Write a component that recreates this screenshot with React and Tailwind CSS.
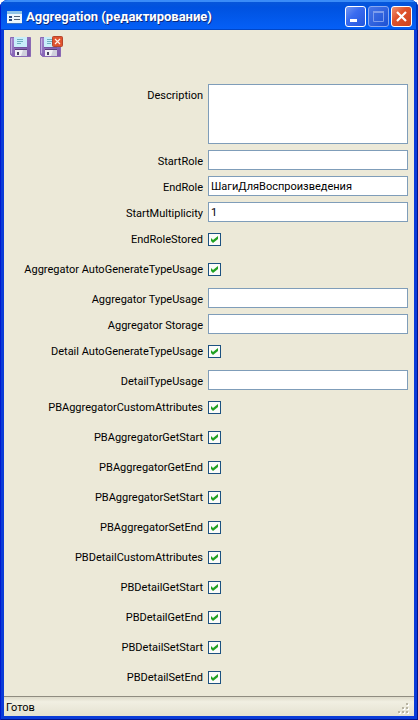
import React from "react";

const rows = [
  { id: "description", label: "Description", type: "area" },
  { id: "startRole", label: "StartRole", type: "text", value: "" },
  { id: "endRole", label: "EndRole", type: "text", value: "ШагиДляВоспроизведения" },
  { id: "startMultiplicity", label: "StartMultiplicity", type: "text", value: "1" },
  { id: "endRoleStored", label: "EndRoleStored", type: "check" },
  { id: "aggAuto", label: "Aggregator AutoGenerateTypeUsage", type: "check" },
  { id: "aggTypeUsage", label: "Aggregator TypeUsage", type: "text", value: "" },
  { id: "aggStorage", label: "Aggregator Storage", type: "text", value: "" },
  { id: "detailAuto", label: "Detail AutoGenerateTypeUsage", type: "check" },
  { id: "detailTypeUsage", label: "DetailTypeUsage", type: "text", value: "" },
  { id: "pbAggCustom", label: "PBAggregatorCustomAttributes", type: "check" },
  { id: "pbAggGetStart", label: "PBAggregatorGetStart", type: "check" },
  { id: "pbAggGetEnd", label: "PBAggregatorGetEnd", type: "check" },
  { id: "pbAggSetStart", label: "PBAggregatorSetStart", type: "check" },
  { id: "pbAggSetEnd", label: "PBAggregatorSetEnd", type: "check" },
  { id: "pbDetCustom", label: "PBDetailCustomAttributes", type: "check" },
  { id: "pbDetGetStart", label: "PBDetailGetStart", type: "check" },
  { id: "pbDetGetEnd", label: "PBDetailGetEnd", type: "check" },
  { id: "pbDetSetStart", label: "PBDetailSetStart", type: "check" },
  { id: "pbDetSetEnd", label: "PBDetailSetEnd", type: "check" },
];

function FormIcon() {
  return (
    <svg width="15" height="13" viewBox="0 0 15 13" aria-hidden="true">
      <rect x="0" y="0" width="15" height="12" fill="#eef6fb" />
      <rect x="0" y="0" width="15" height="3" fill="#8fc3e6" />
      <path d="M0 12.5h15" stroke="#3b72c0" />
      <path d="M2 6h3M2 9h3" stroke="#2b4a80" strokeWidth="2" />
      <path d="M7 5.500h6M7 8.500h6" stroke="#4d5f74" strokeWidth="1" />
    </svg>
  );
}

function SaveIcon({ closing }) {
  return (
    <svg width="24" height="22" viewBox="0 0 24 22" aria-hidden="true">
      <defs>
        <linearGradient id="floppy" x1="0" y1="0" x2="1" y2="1">
          <stop offset="0" stopColor="#a78bd0" />
          <stop offset="0.5" stopColor="#8a68b8" />
          <stop offset="1" stopColor="#7a55a5" />
        </linearGradient>
      </defs>
      <path d="M0.5 1.5h20v19h-18l-2-2z" fill="url(#floppy)" stroke="#8a69b4" />
      <path d="M1.5 2.500v15" stroke="#c3b0df" />
      <rect x="4" y="1" width="13" height="10" fill="#c9eefa" />
      <path d="M4 11.500h13" stroke="#7455a0" />
      <path d="M7 3.500h6M7 5.500h6M7 7.500h4" stroke="#6fb0c0" />
      <rect x="5" y="14" width="12" height="6" fill="#f0f0f4" />
      <path d="M5 13.500h12" stroke="#5b3f7c" />
      <rect x="7" y="16" width="2" height="3" fill="#4b4264" />
      <path d="M13 14h4v6h-6z" fill="#cfd0dc" />
      {closing && (
        <g>
          <rect x="12.5" y="0.5" width="10" height="10" rx="1" fill="#e0532f" stroke="#b5452c" />
          <path d="M15 3l5 5M20 3l-5 5" stroke="#fff0e8" strokeWidth="1.2" />
        </g>
      )}
    </svg>
  );
}

function Field({ row }) {
  const box = "w-full rounded-none border border-[#7f9db9] bg-white text-[11px] text-black outline-none";
  if (row.type === "area") {
    return <textarea id={row.id} className={`${box} block h-[60px] resize-none px-0.5`} />;
  }
  if (row.type === "text") {
    return (
      <input id={row.id} type="text" defaultValue={row.value} className={`${box} block h-5 px-0.5`} />
    );
  }
  return (
    <div className="grid h-6 w-[13px] pt-[5px]">
      <input
        id={row.id}
        type="checkbox"
        defaultChecked
        className="peer col-start-1 row-start-1 size-[13px] appearance-none border border-[#1c5180] bg-[#fbfbf9]"
      />
      <svg
        className="pointer-events-none invisible col-start-1 row-start-1 size-[13px] peer-checked:visible"
        viewBox="0 0 13 13"
        aria-hidden="true"
      >
        <path d="M3 5l2 2 5-4v3l-5 4-2-2z" fill="#21a121" />
      </svg>
    </div>
  );
}

export default function App() {
  return (
    <main className="flex min-h-screen flex-col overflow-hidden rounded-t-lg bg-[#0a3bd8] font-[Roboto,sans-serif] text-[11px] text-black shadow-[inset_1px_0_#0019cf,inset_-1px_0_#00138c,inset_0_-1px_#00138c]">
      <header className="flex h-[30px] items-center justify-between bg-linear-to-b from-[#0a58d8] via-[#0052e0] via-25% to-[#0560f8] pr-1.5 pl-[7px] shadow-[inset_0_2px_#3a8cf8,inset_1px_0_#0019cf,inset_-2px_0_#0030b8,inset_0_-1px_#0046c8]">
        <div className="flex items-center gap-1 pt-1">
          <FormIcon />
          <h1 className="text-[13px] leading-4 font-bold whitespace-nowrap text-white [text-shadow:1px_1px_#0a2a80]">
            Aggregation (редактирование)
          </h1>
        </div>
        <div className="flex gap-0.5 pt-0.5">
          <button
            type="button"
            aria-label="Свернуть"
            className="size-[21px] rounded-[3px] border border-white bg-linear-to-br from-[#7295f0] via-[#3a6cf0] via-40% to-[#2456dc]"
          >
            <svg viewBox="0 0 19 19" aria-hidden="true">
              <path d="M4 12h7v3H4z" fill="#fff" />
            </svg>
          </button>
          <button
            type="button"
            aria-label="Развернуть"
            disabled
            className="size-[21px] rounded-[3px] border border-[#88a8f0] bg-linear-to-br from-[#4775e8] to-[#1b50d4]"
          >
            <svg viewBox="0 0 19 19" aria-hidden="true">
              <path d="M4.500 5h10v9.500h-10z" fill="none" stroke="#7d9cec" />
              <path d="M4 5h11" stroke="#7d9cec" strokeWidth="2" />
            </svg>
          </button>
          <button
            type="button"
            aria-label="Закрыть"
            className="size-[21px] rounded-[3px] border border-white bg-linear-to-br from-[#ee9070] via-[#e0532c] via-40% to-[#cc4420]"
          >
            <svg viewBox="0 0 19 19" aria-hidden="true">
              <path d="M5 5l9 9M14 5l-9 9" stroke="#fff" strokeWidth="2.200" />
            </svg>
          </button>
        </div>
      </header>

      <div className="mx-1 mb-1 flex flex-1 flex-col bg-[#ece9d8]">
        <div className="flex h-[54px] items-start gap-1.5 px-1.5 pt-1.5">
          <button type="button" aria-label="Сохранить">
            <SaveIcon />
          </button>
          <button type="button" aria-label="Сохранить и закрыть">
            <SaveIcon closing />
          </button>
        </div>

        <form className="flex flex-1 flex-col gap-1.5 pr-1.5 pb-1.5">
          {rows.map((row) => (
            <div key={row.id} className="flex items-start gap-[5px]">
              <label htmlFor={row.id} className="h-5 w-[199px] shrink-0 text-right leading-6 whitespace-nowrap">
                {row.label}
              </label>
              <div className="min-w-0 flex-1">
                <Field row={row} />
              </div>
            </div>
          ))}
        </form>

        <footer className="flex h-5 items-end justify-between border-t border-[#8f8c80] bg-linear-to-b from-[#dedbca] via-[#f1efe2] via-25% to-[#e4e1d0] pr-1 pl-0.5">
          <span className="leading-4">Готов</span>
          <svg width="12" height="13" viewBox="0 0 12 13" aria-hidden="true">
            <path
              d="M9 1h2v2H9zM9 5h2v2H9zM5 5h2v2H5zM9 9h2v2H9zM5 9h2v2H5zM1 9h2v2H1z"
              fill="#fff"
            />
            <path
              d="M8 0h2v2H8zM8 4h2v2H8zM4 4h2v2H4zM8 8h2v2H8zM4 8h2v2H4zM0 8h2v2H0z"
              fill="#b8b4a2"
            />
          </svg>
        </footer>
      </div>
    </main>
  );
}
